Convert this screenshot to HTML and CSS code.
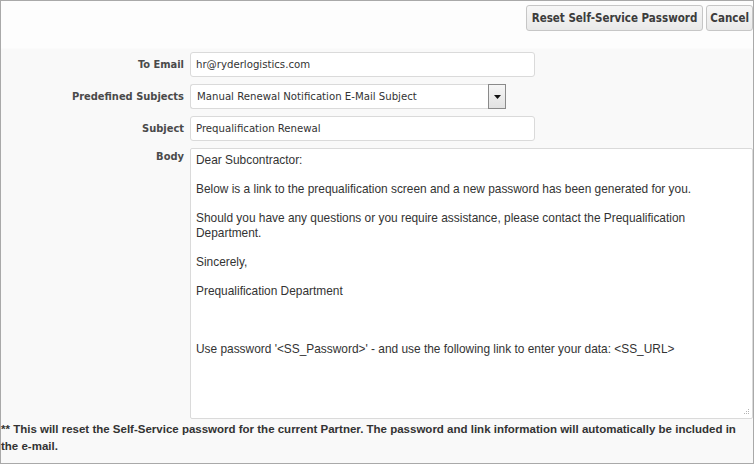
FILE: index.html
```html
<!DOCTYPE html>
<html>
<head>
<meta charset="utf-8">
<link rel="stylesheet" href="styles.css">
</head>
<body>
<div class="frame">
  <div class="toolbar">
    <button class="btn">Reset Self-Service Password</button>
    <button class="btn btn-narrow">Cancel</button>
  </div>
  <div class="form">
    <label class="lbl">To Email</label>
    <div class="field"><div class="input wide">hr@ryderlogistics.com</div></div>

    <label class="lbl">Predefined Subjects</label>
    <div class="field">
      <div class="select">
        <div class="select-val">Manual Renewal Notification E-Mail Subject</div>
        <div class="select-btn"><svg width="7" height="4" viewBox="0 0 7 4"><path d="M0 0H7L3.5 4Z" fill="#111"/></svg></div>
      </div>
    </div>

    <label class="lbl">Subject</label>
    <div class="field"><div class="input wide">Prequalification Renewal</div></div>

    <label class="lbl lbl-top">Body</label>
    <div class="field">
      <div class="textarea">
        <p>Dear Subcontractor:</p>
        <p>Below is a link to the prequalification screen and a new password has been generated for you.</p>
        <p>Should you have any questions or you require assistance, please contact the Prequalification Department.</p>
        <p>Sincerely,</p>
        <p class="gap3">Prequalification Department</p>
        <p>Use password '&lt;SS_Password&gt;' - and use the following link to enter your data: &lt;SS_URL&gt;</p>
        <svg class="grip" width="7" height="7" viewBox="0 0 7 7"><g fill="#b5b5b5"><rect x="5" y="0" width="1" height="1"/><rect x="3" y="2" width="1" height="1"/><rect x="5" y="2" width="1" height="1"/><rect x="1" y="4" width="1" height="1"/><rect x="3" y="4" width="1" height="1"/><rect x="5" y="4" width="1" height="1"/></g></svg>
      </div>
    </div>
  </div>
  <div class="note">** This will reset the Self-Service password for the current Partner. The password and link information will automatically be included in the e-mail.</div>
</div>
</body>
</html>
```
FILE: styles.css
```css
html, body {
  margin: 0;
  padding: 0;
  background: #ffffff;
}
.frame {
  width: 752px;
  height: 462px;
  border: 1px solid #a9a9a9;
  background: linear-gradient(#fdfdfd 0, #fdfdfd 47px, #f9f9f9 48px, #f9f9f9 100%);
  font-family: "DejaVu Sans Condensed", "Liberation Sans", sans-serif;
  position: relative;
}
.toolbar {
  display: flex;
  justify-content: flex-end;
  gap: 3px;
  padding: 4px 0 0 0;
  height: 25px;
}
.btn {
  height: 26px;
  margin: 0;
  padding: 0 5px;
  border: 1px solid #c6c6c6;
  border-radius: 3px;
  background: linear-gradient(#f7f7f7, #e9e9e9);
  font-family: "DejaVu Sans Condensed", "Liberation Sans", sans-serif;
  font-weight: bold;
  font-size: 11.5px;
  color: #3c3c3c;
}
.btn-narrow {
  padding: 0 3px;
}
.form {
  display: grid;
  grid-template-columns: 183px 1fr;
  column-gap: 6px;
  row-gap: 7px;
  margin-top: 22px;
}
.lbl {
  text-align: right;
  font-weight: bold;
  font-size: 11px;
  color: #4a4a4a;
  display: flex;
  align-items: center;
  justify-content: flex-end;
}
.lbl-top {
  align-items: flex-start;
  padding-top: 2px;
}
.field {
  display: flex;
}
.input {
  box-sizing: border-box;
  height: 25px;
  border: 1px solid #dadada;
  border-radius: 3px;
  background: #fff;
  font-size: 11.3px;
  color: #333;
  padding: 0 5px;
  display: flex;
  align-items: center;
}
.wide {
  width: 345px;
}
.select {
  display: flex;
  height: 25px;
}
.select-val {
  box-sizing: border-box;
  width: 298px;
  height: 25px;
  border: 1px solid #dadada;
  border-right: none;
  border-radius: 3px 0 0 3px;
  background: #fff;
  font-size: 11.3px;
  color: #333;
  padding: 0 6px;
  display: flex;
  align-items: center;
}
.select-btn {
  box-sizing: border-box;
  width: 18px;
  height: 25px;
  border: 1px solid #8a8a8a;
  background: linear-gradient(#f6f6f6, #e2e2e2);
  display: flex;
  align-items: center;
  justify-content: center;
}
.textarea {
  box-sizing: border-box;
  width: 563px;
  height: 271px;
  border: 1px solid #dadada;
  border-radius: 2px;
  background: #fff;
  padding: 4px 5px;
  font-family: "Liberation Sans", Arial, sans-serif;
  font-size: 11.9px;
  line-height: 14.5px;
  color: #333;
  position: relative;
}
.textarea p {
  margin: 0 0 14.5px 0;
}
.textarea p.gap3 {
  margin-bottom: 43.5px;
}
.grip {
  position: absolute;
  right: 2px;
  bottom: 2px;
}
.note {
  margin-top: 2px;
  padding: 0 12px 0 0;
  font-family: "Liberation Sans", Arial, sans-serif;
  font-weight: bold;
  font-size: 11.5px;
  line-height: 17px;
  color: #333;
}
```
